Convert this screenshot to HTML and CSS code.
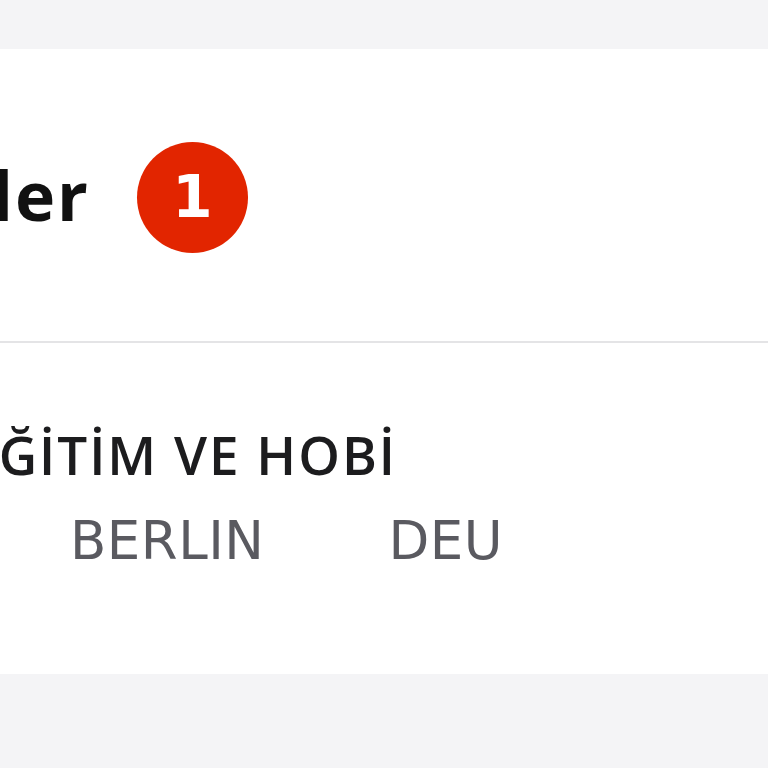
FILE: index.html
```html
<!DOCTYPE html>
<html lang="tr">
<head>
<meta charset="utf-8">
<link rel="stylesheet" href="styles.css">
</head>
<body>
<div class="page">
  <section class="card">
    <header class="card-header">
      <div class="title-wrap"><h1 class="title">Bildirimler</h1></div>
      <span class="badge">1</span>
    </header>
    <div class="divider"></div>
    <div class="item">
      <div class="category-wrap"><h2 class="category">ĞİTİM VE HOBİ</h2></div>
      <div class="location">
        <span class="city">BERLIN</span>
        <span class="country">DEU</span>
      </div>
    </div>
  </section>
</div>
</body>
</html>
```
FILE: styles.css
```css
html, body {
  margin: 0;
  padding: 0;
  background: #f4f4f6;
  overflow: hidden;
  width: 768px;
  height: 768px;
}
.page {
  padding-top: 49px;
}
.card {
  background: #ffffff;
  height: 625px;
  display: flex;
  flex-direction: column;
}
.card-header {
  height: 292px;
  display: flex;
  align-items: center;
  gap: 49px;
}
.title-wrap {
  width: 88px;
  display: flex;
  justify-content: flex-end;
}
.title {
  margin: 0;
  font-family: "Open Sans", "Liberation Sans", sans-serif;
  font-weight: 700;
  font-size: 68px;
  line-height: 1;
  letter-spacing: 2px;
  margin-right: -2px;
  color: #111111;
  white-space: nowrap;
  flex-shrink: 0;
}
.badge {
  width: 111px;
  height: 111px;
  border-radius: 50%;
  background: #e22500;
  color: #ffffff;
  display: flex;
  align-items: center;
  justify-content: center;
  font-family: "DejaVu Sans", sans-serif;
  font-weight: 700;
  font-size: 58px;
  line-height: 1;
  margin-top: 4px;
}
.divider {
  height: 2px;
  background: #e4e4e6;
}
.item {
  padding-top: 85px;
  display: flex;
  flex-direction: column;
  gap: 33px;
}
.category-wrap {
  width: 397px;
  display: flex;
  justify-content: flex-end;
}
.category {
  margin: 0;
  font-family: "Open Sans", "DejaVu Sans", sans-serif;
  font-weight: 600;
  font-size: 53px;
  line-height: 1;
  letter-spacing: 2px;
  color: #1c1c1e;
  white-space: nowrap;
  flex-shrink: 0;
}
.location {
  display: flex;
  padding-left: 70px;
  gap: 124px;
  font-family: "DejaVu Sans", sans-serif;
  font-size: 53px;
  line-height: 1;
  letter-spacing: 0.5px;
  color: #5a5a60;
}
```
